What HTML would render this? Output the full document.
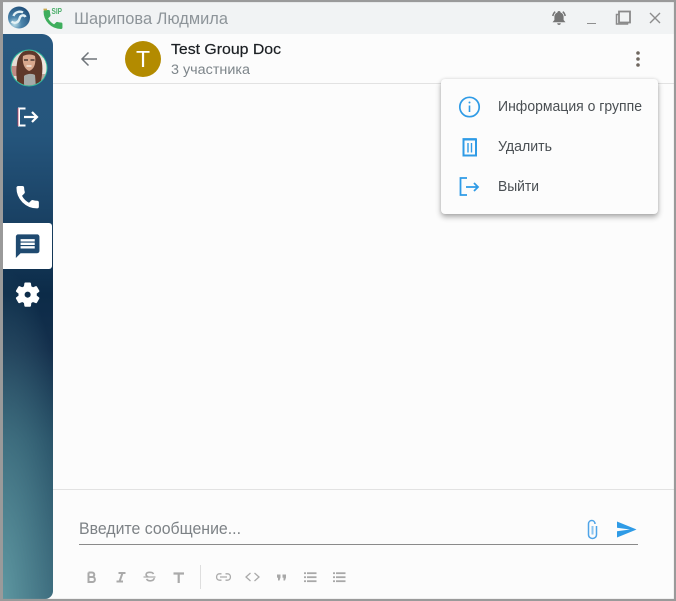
<!DOCTYPE html>
<html lang="ru"><head><meta charset="utf-8"><title>Test Group Doc</title>
<style>
html,body{margin:0;padding:0;width:676px;height:601px;overflow:hidden;background:#fcfcfc}
body{position:relative;font-family:"Liberation Sans",sans-serif}
.a{position:absolute}
#side{left:3px;top:34px;width:50px;height:565px;border-radius:0 11px 8px 0;background:radial-gradient(ellipse 75px 330px at 0% 100%,rgba(105,165,172,.8),rgba(105,165,172,0)),linear-gradient(180deg,#275880 0%,#25557c 18%,#1a4265 32%,#0c2b48 46%,#142f4c 56%,#20475f 72%,#2f5a6f 100%)}
#tab{left:3px;top:223px;width:49px;height:46px;background:#fff;border-radius:0 3px 3px 0}
#menu{left:441px;top:79px;width:217px;height:135px;background:#fcfcfc;border-radius:4px;box-shadow:0 3px 6px rgba(0,0,0,.32),0 0 3px rgba(0,0,0,.1)}
svg{position:absolute;left:0;top:0}
</style></head><body>
<div class="a" style="left:0;top:0;width:676px;height:34px;background:#f1f3f4"></div>
<div class="a" style="left:53px;top:83px;width:623px;height:1px;background:#e2e2e2"></div>
<div class="a" style="left:53px;top:489px;width:623px;height:1px;background:#e2e2e2"></div>
<div class="a" style="left:79px;top:544px;width:559px;height:1px;background:#8a8a8a"></div>
<div class="a" style="left:200px;top:565px;width:1px;height:24px;background:#dedede"></div>
<div class="a" id="side"></div>
<div class="a" id="tab"></div>
<svg width="676" height="601" viewBox="0 0 676 601">
<defs><clipPath id="av"><circle cx="29" cy="68" r="17.500"/></clipPath>
<radialGradient id="lg" cx=".3" cy=".8" r=".9"><stop offset="0" stop-color="#b9dce6"/><stop offset=".35" stop-color="#4d86ad"/><stop offset="1" stop-color="#1c4a75"/></radialGradient></defs>
<!-- logo -->
<circle cx="19" cy="17.500" r="11" fill="url(#lg)"/>
<path d="M11.500 21.500c3 2.500 6.500 1 7.500-1.500s1-4 3-4.500 3 .5 3.500 1.500M13.500 16c1-3.500 6-5.500 9.500-3.500" fill="none" stroke="#e4f1f5" stroke-width="2.400"/>
<!-- sip phone -->
<g transform="translate(41,7.500)"><path d="M6.620 10.790c1.440 2.830 3.760 5.140 6.590 6.590l2.200-2.200c.27-.27.67-.36 1.020-.24 1.120.37 2.330.57 3.570.57.55 0 1 .45 1 1V20c0 .55-.45 1-1 1-9.390 0-17-7.610-17-17 0-.55.45-1 1-1h3.500c.55 0 1 .45 1 1 0 1.250.2 2.450.57 3.570.11.35.03.74-.25 1.020l-2.200 2.200z" fill="#3fae5d" stroke="#3fae5d" stroke-width=".9"/></g>
<path d="M43.500 9.500h3.500" stroke="#c9a94e" stroke-width="1.800"/>
<text x="51.500" y="14" font-size="8" font-weight="700" fill="#4cae6a" textLength="10.500" lengthAdjust="spacingAndGlyphs">SIP</text>
<text x="74" y="24" font-size="16.500" fill="#8d9499" textLength="154" lengthAdjust="spacingAndGlyphs">Шарипова Людмила</text>
<!-- bell -->
<g fill="#757575"><path d="M559 11c1 0 1.600.7 1.600 1.500 2.200.8 3 2.600 3 4.500v3l1.900 2.200h-13l1.900-2.200v-3c0-1.900.8-3.700 3-4.500 0-.8.6-1.500 1.600-1.500z"/><path d="M557.200 23.200h3.600c0 1.100-.8 1.700-1.800 1.700s-1.800-.6-1.800-1.700z"/></g>
<path d="M552.800 16c.3-1.800 1.100-3.200 2.400-4.300M565.200 16c-.3-1.800-1.100-3.200-2.400-4.300" stroke="#757575" stroke-width="1.500" fill="none"/>
<!-- window controls -->
<path d="M587 23.500h9" stroke="#8f8f8f" stroke-width="1"/>
<rect x="619" y="11.500" width="11" height="11" fill="none" stroke="#8a8a8a" stroke-width="1.800"/>
<path d="M619 14.500h-2.500v9.500h11V23" fill="none" stroke="#8a8a8a" stroke-width="1.500"/>
<path d="M650 13l10 10M660 13l-10 10" stroke="#8c8c8c" stroke-width="1.400"/>
<!-- avatar -->
<circle cx="29" cy="68" r="18.500" fill="#2fbb9d"/>
<g clip-path="url(#av)"><rect x="10" y="50" width="38" height="38" fill="#e6dcd5"/>
<rect x="10" y="66" width="10" height="10" fill="#c08a84"/><rect x="38" y="58" width="10" height="16" fill="#efe6de"/>
<rect x="38" y="74" width="10" height="14" fill="#b9a79c"/>
<path d="M18 86c-2-9-2-16-1-23 1-8 6-13 12-13s12 5 13 13c1 7 0 14-2 23z" fill="#5f382a"/>
<path d="M23 56c4-2 9-2 12 0 1 6 0 13-6 15-5-2-7-9-6-15z" fill="#d9a88e"/>
<path d="M24 88v-12c2-2 8-3 11-1l1 13z" fill="#a6aaa8"/>
<path d="M24 60h4M30.500 60h4" stroke="#4a3732" stroke-width="1.400"/>
<path d="M26.500 66h5" stroke="#f3e7df" stroke-width="1.400"/></g>
<!-- logout white -->
<path d="M25.500 108.500H19v17h6.500" fill="none" stroke="#fff" stroke-width="2"/>
<path d="M18 108v18" stroke="#c23f5e" stroke-width=".8"/>
<path d="M24 117h13M32 112l5 5-5 5" fill="none" stroke="#fff" stroke-width="2.200"/>
<!-- phone -->
<g transform="translate(13.500,183) scale(1.180)"><path d="M6.620 10.790c1.440 2.830 3.760 5.140 6.590 6.590l2.200-2.200c.27-.27.67-.36 1.020-.24 1.120.37 2.330.57 3.570.57.55 0 1 .45 1 1V20c0 .55-.45 1-1 1-9.390 0-17-7.610-17-17 0-.55.45-1 1-1h3.500c.55 0 1 .45 1 1 0 1.250.2 2.450.57 3.570.11.35.03.74-.25 1.020l-2.200 2.200z" fill="#fff" stroke="#fff" stroke-width="1"/></g>
<!-- chat -->
<g transform="translate(13.500,232) scale(1.180)"><path d="M20 2H4c-1.100 0-1.990.9-1.990 2L2 22l4-4h14c1.100 0 2-.9 2-2V4c0-1.100-.9-2-2-2zm-2 12H6v-2h12v2zm0-3H6V9h12v2zm0-3H6V6h12v2z" fill="#1f4a70"/></g>
<!-- gear -->
<g transform="translate(13,280) scale(1.220)"><path fill-rule="evenodd" d="M19.140 12.940c.04-.3.06-.61.06-.94 0-.32-.02-.64-.07-.94l2.030-1.580c.18-.14.23-.41.12-.61l-1.920-3.320c-.12-.22-.37-.29-.59-.22l-2.390.96c-.5-.38-1.030-.7-1.620-.94l-.36-2.540c-.04-.24-.24-.41-.48-.41h-3.840c-.24 0-.43.17-.47.41l-.36 2.540c-.59.24-1.130.57-1.620.94l-2.390-.96c-.22-.08-.47 0-.59.22L2.740 8.870c-.12.21-.08.47.12.61l2.030 1.580c-.05.3-.09.63-.09.94s.02.64.07.94l-2.030 1.580c-.18.14-.23.41-.12.61l1.920 3.320c.12.22.37.29.59.22l2.390-.96c.5.38 1.030.7 1.620.94l.36 2.540c.05.24.24.41.48.41h3.840c.24 0 .44-.17.47-.41l.36-2.540c.59-.24 1.130-.56 1.620-.94l2.390.96c.22.08.47 0 .59-.22l1.920-3.320c.12-.22.07-.47-.12-.61l-2.010-1.580zM12 14.800c-1.550 0-2.800-1.250-2.800-2.800s1.250-2.800 2.800-2.800 2.800 1.250 2.800 2.800-1.250 2.800-2.800 2.800z" fill="#fff" stroke="#fff" stroke-width=".6"/></g>
<!-- header -->
<path d="M97 59H82M88.500 52.500L82 59l6.500 6.500" fill="none" stroke="#6f757a" stroke-width="1.500"/>
<circle cx="143" cy="59" r="18" fill="#b38b00"/>
<text x="143" y="67" font-size="23" fill="#fff" text-anchor="middle">T</text>
<text x="171" y="54" font-size="15" fill="#1c2024" stroke="#1c2024" stroke-width=".2" textLength="110" lengthAdjust="spacingAndGlyphs">Test Group Doc</text>
<text x="171" y="74" font-size="13.500" fill="#7d858a" textLength="79" lengthAdjust="spacingAndGlyphs">3 участника</text>
<circle cx="638" cy="53" r="1.800" fill="#6f675f"/><circle cx="638" cy="59" r="1.800" fill="#6f675f"/><circle cx="638" cy="65" r="1.800" fill="#6f675f"/>
</svg>
<div class="a" id="menu"></div>
<svg width="676" height="601" viewBox="0 0 676 601">
<circle cx="469.500" cy="107" r="9.700" fill="none" stroke="#2f9be6" stroke-width="1.700"/>
<path d="M469.500 105.500v6.500" stroke="#2f9be6" stroke-width="1.600"/><circle cx="469.500" cy="102.500" r="1" fill="#2f9be6"/>
<text x="498" y="111" font-size="14.500" fill="#4a4f53" textLength="144" lengthAdjust="spacingAndGlyphs">Информация о группе</text>
<path d="M462.500 139h14" stroke="#2f9be6" stroke-width="1.800"/>
<rect x="463.500" y="139.500" width="12.500" height="16" fill="none" stroke="#2f9be6" stroke-width="2"/>
<path d="M468 143v9.500M471.500 143v9.500" stroke="#2f9be6" stroke-width="1.400"/>
<text x="498" y="151" font-size="14.500" fill="#4a4f53" textLength="54" lengthAdjust="spacingAndGlyphs">Удалить</text>
<path d="M467 178h-6.500v17h6.500" fill="none" stroke="#2f9be6" stroke-width="1.800"/>
<path d="M466 187h12M474 183l4 4-4 4" fill="none" stroke="#2f9be6" stroke-width="1.800"/>
<text x="498" y="191" font-size="14.500" fill="#4a4f53" textLength="41" lengthAdjust="spacingAndGlyphs">Выйти</text>
<!-- input -->
<text x="79" y="534" font-size="16.500" fill="#7d8286" textLength="162" lengthAdjust="spacingAndGlyphs">Введите сообщение...</text>
<path d="M592.500 526v8.500" stroke="#8cc4ef" stroke-width="2"/>
<path d="M596.500 526v8.500c0 5.300-8 5.300-8 0V524c0-4.700 6.500-4.700 6.500 0" fill="none" stroke="#4fa4e8" stroke-width="1.500"/>
<path d="M617 521.500L636.500 529.500l-19.500 8v-6.200l13-1.800-13-1.800z" fill="#2f9be6"/>
<!-- toolbar -->
<g fill="none" stroke="#aaa">
<path d="M88.500 572.500h3.500c3 0 3 4.500 0 4.500h-3.500m0 0h4c3.200 0 3.200 5 0 5h-4zM88.500 572.500v9.500" stroke-width="2"/>
<path d="M118.500 573h7M116.500 581.500h6.500M122.500 573l-3 8.500" stroke-width="2"/>
<path d="M143.500 577h12" stroke-width="1.200"/>
<path d="M153.500 574c-1-2.200-6.500-2.200-7.300 0-.4 1.300.5 2.300 2 2.800m5.800 1.200c.8 2.800-5.500 4-7.500 1" stroke-width="1.600"/>
<path d="M173.500 573.500h10.500M178.700 573.500v9.500" stroke-width="2.200"/>
<path d="M221.500 573.800h-2c-3.900 0-3.900 6.400 0 6.400h2M225.500 573.800h2c3.900 0 3.900 6.400 0 6.400h-2M220 577h7" stroke-width="1.300"/>
<path d="M250.500 573l-4.500 4 4.500 4M254.500 573l4.500 4-4.500 4" stroke-width="1.300"/>
</g>
<g fill="#a8a8a8">
<rect x="277" y="574.500" width="3.500" height="3.200"/><rect x="282.500" y="574.500" width="3.500" height="3.200"/>
<path d="M278 577.500h2.500l-1 3h-1.500zM283.500 577.500h2.500l-1 3h-1.500z"/>
<rect x="304" y="572.300" width="2" height="1.800"/><rect x="307" y="572.300" width="9.500" height="1.800"/>
<rect x="304" y="576.300" width="2" height="1.800"/><rect x="307" y="576.300" width="9.500" height="1.800"/>
<rect x="304" y="580.300" width="2" height="1.800"/><rect x="307" y="580.300" width="9.500" height="1.800"/>
<rect x="333" y="572.300" width="2" height="1.800"/><rect x="336" y="572.300" width="9.500" height="1.800"/>
<rect x="333" y="576.300" width="2" height="1.800"/><rect x="336" y="576.300" width="9.500" height="1.800"/>
<rect x="333" y="580.300" width="2" height="1.800"/><rect x="336" y="580.300" width="9.500" height="1.800"/>
</g>
<!-- window border -->
<path d="M1.500 601V1H675V600H0" fill="none" stroke="#9a9a9a" stroke-width="2.200"/>
<rect x="0" y="0" width="3" height="601" fill="#9a9a9a"/>
<rect x="0" y="599" width="676" height="2" fill="#9a9a9a"/>
</svg>
</body></html>
